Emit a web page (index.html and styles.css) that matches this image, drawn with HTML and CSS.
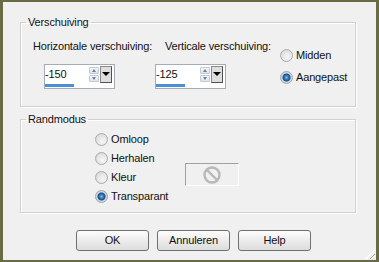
FILE: index.html
```html
<!DOCTYPE html>
<html lang="nl">
<head>
    <meta charset="UTF-8">
    <title>Verschuiving</title>
    <link rel="stylesheet" href="styles.css">
</head>
<body>
    <div class="window">
        <fieldset class="group">
            <legend>Verschuiving</legend>
            <div class="offset-row">
                <div class="field field-h">
                    <label>Horizontale verschuiving:</label>
                    <div class="spin">
                        <div class="spin-top">
                            <span class="spin-value">-150</span>
                            <span class="spin-arrows"><span class="arrow up"></span><span class="arrow down"></span></span>
                            <span class="spin-drop"></span>
                        </div>
                        <div class="spin-bar" style="width:29px"></div>
                    </div>
                </div>
                <div class="field field-v">
                    <label>Verticale verschuiving:</label>
                    <div class="spin">
                        <div class="spin-top">
                            <span class="spin-value">-125</span>
                            <span class="spin-arrows"><span class="arrow up"></span><span class="arrow down"></span></span>
                            <span class="spin-drop"></span>
                        </div>
                        <div class="spin-bar" style="width:29px"></div>
                    </div>
                </div>
                <div class="radios radios-offset">
                    <div class="radio"><span class="dot"></span>Midden</div>
                    <div class="radio"><span class="dot checked"></span>Aangepast</div>
                </div>
            </div>
        </fieldset>

        <fieldset class="group group-mode">
            <legend>Randmodus</legend>
            <div class="mode-row">
                <div class="mode-list">
                    <div class="radio"><span class="dot"></span>Omloop</div>
                    <div class="radio"><span class="dot"></span>Herhalen</div>
                    <div class="radio"><span class="dot"></span>Kleur</div>
                    <div class="radio"><span class="dot checked"></span>Transparant</div>
                </div>
                <div class="swatch">
                    <svg width="18" height="18" viewBox="0 0 18 18">
                        <circle cx="9" cy="9" r="7.5" fill="none" stroke="#b8b8b8" stroke-width="2.4"/>
                        <line x1="4" y1="4" x2="14" y2="14" stroke="#b8b8b8" stroke-width="2.4"/>
                    </svg>
                </div>
            </div>
        </fieldset>

        <div class="buttons">
            <button>OK</button>
            <button>Annuleren</button>
            <button>Help</button>
        </div>

        <div class="grip"></div>
    </div>
</body>
</html>
```

FILE: styles.css
```css
*{
    margin: 0;
    padding: 0;
    box-sizing: border-box;
}

body{
    font: 11px/13px "Liberation Sans", Arial, sans-serif;
    letter-spacing: -0.15px;
    color: #111;
    background: #6a6a45;
}

.window{
    position: relative;
    width: 379px;
    height: 262px;
    border: solid #6a6a45;
    border-width: 2px 3px;
    background: #f0f0f0;
}

.group{
    margin: 14px 20px 0 17px;
    border: 1px solid #d0d0d0;
    box-shadow: 1px 1px 0 #fff, inset 1px 1px 0 #fff;
}

.group legend{
    margin-left: 5px;
    padding: 0 2px;
    line-height: 13px;
}

.group-mode{
    margin-top: 6px;
}

/* verschuiving */
.offset-row{
    display: flex;
    padding: 11px 0 17px 12px;
}

.field{
    display: flex;
    flex-direction: column;
}

.field label{
    white-space: nowrap;
}

.field-h{
    width: 122px;
}

.field-h .spin{
    margin-left: 11px;
}

.field-v{
    width: 125px;
}

.field-v label{
    margin-left: 10px;
}

.spin{
    width: 71px;
    height: 25px;
    margin-top: 11px;
    border: 1px solid #a5acb5;
    background: #fff;
    padding: 0 2px 1px 0;
    display: flex;
    flex-direction: column;
}

.spin-top{
    display: flex;
    align-items: center;
    height: 19px;
}

.spin-value{
    flex: 1;
    line-height: 13px;
}

.spin-arrows{
    display: flex;
    flex-direction: column;
    gap: 1px;
    width: 10px;
}

.arrow{
    position: relative;
    height: 7px;
    border: 1px solid #c3cad6;
    background: linear-gradient(#f4f6fa, #dde3ec);
    border-radius: 1px;
}

.arrow::after{
    content: "";
    position: absolute;
    left: 2px;
    top: 1px;
    border-left: 2px solid transparent;
    border-right: 2px solid transparent;
}

.arrow.up::after{
    border-bottom: 3px solid #6d7f9c;
}

.arrow.down::after{
    border-top: 3px solid #6d7f9c;
}

.spin-drop{
    position: relative;
    width: 12px;
    height: 17px;
    margin-left: 1px;
    border: 1px solid #8a8a8a;
    border-right-color: #505050;
    border-bottom-color: #505050;
    background: #dedede;
}

.spin-drop::after{
    content: "";
    position: absolute;
    left: 1px;
    top: 5px;
    border-left: 4px solid transparent;
    border-right: 4px solid transparent;
    border-top: 4px solid #000;
}

.spin-bar{
    height: 3px;
    background: #4a90d9;
}

/* keuzerondjes */
.radios-offset{
    margin-top: 9px;
    display: flex;
    flex-direction: column;
    gap: 9px;
}

.radio{
    display: flex;
    align-items: center;
    height: 13px;
    white-space: nowrap;
}

.dot{
    width: 13px;
    height: 13px;
    margin-right: 3px;
    border-radius: 50%;
    border: 1px solid #acacac;
    background: radial-gradient(circle at 60% 65%, #f6f6f6 0, #e4e4e4 55%, #cdcdcd 100%);
}

.dot.checked{
    border-color: #9aa4ae;
    background: radial-gradient(circle at 50% 50%, #8cc4ee 0, #3a88c6 1.5px, #1c4f80 3.5px, #c9d3dc 4.5px, #eef1f4 100%);
}

/* randmodus */
.mode-row{
    display: flex;
    padding: 4px 0 6px 74px;
}

.mode-list{
    width: 90px;
}

.mode-list .radio{
    height: 19px;
}

.swatch{
    display: flex;
    align-items: center;
    justify-content: center;
    width: 54px;
    height: 23px;
    margin-top: 33px;
    border: 1px solid #fff;
    border-top-color: #a0a0a0;
    border-left-color: #a0a0a0;
}

/* knoppen */
.buttons{
    display: flex;
    gap: 8px;
    margin: 17px 0 0 73px;
}

.buttons button{
    width: 73px;
    height: 21px;
    font: inherit;
    letter-spacing: inherit;
    color: #111;
    border: 1px solid #707070;
    border-radius: 3px;
    background: linear-gradient(#fdfdfd, #ececec 50%, #dcdcdc);
}

.grip{
    position: absolute;
    right: 1px;
    bottom: 1px;
    width: 10px;
    height: 10px;
    background: repeating-linear-gradient(135deg, transparent 0 2px, #a0a0a0 2px 3px, #fff 3px 4px);
    clip-path: polygon(100% 0, 100% 100%, 0 100%);
}
```
